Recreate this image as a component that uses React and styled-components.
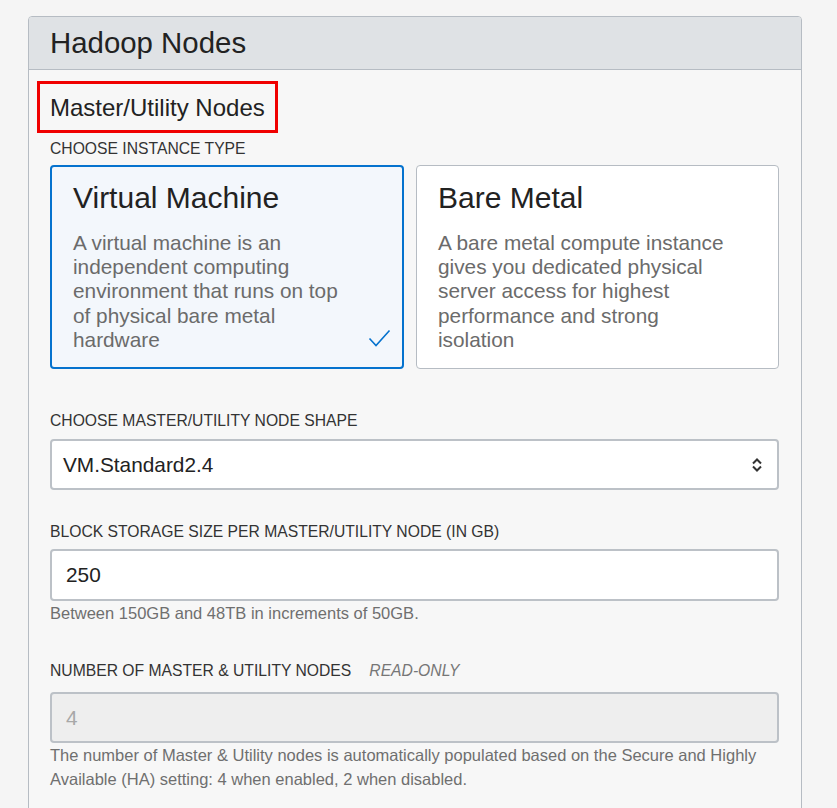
import React from "react";
import styled, { createGlobalStyle } from "styled-components";

const Global = createGlobalStyle`
  html, body { margin: 0; padding: 0; background: #f5f5f5; }
  body { font-family: "Liberation Sans", Arial, Helvetica, sans-serif; color: #222; }
  * { box-sizing: border-box; }
`;

const Page = styled.div`
  padding: 16px 0 0 28px;
  height: 808px;
  overflow: hidden;
`;

const Panel = styled.section`
  width: 774px;
  border: 1px solid #b6bcc3;
  border-radius: 4px 4px 0 0;
  background: #f7f7f7;
  min-height: 900px;
`;

const PanelHeader = styled.header`
  height: 53px;
  display: flex;
  align-items: center;
  padding: 0 21px;
  background: #dfe2e5;
  border-bottom: 1px solid #b6bcc3;
  border-radius: 3px 3px 0 0;
`;

const PanelTitle = styled.h2`
  margin: 0;
  font-size: 29.4px;
  font-weight: 400;
  line-height: 34px;
  color: #222;
`;

const PanelBody = styled.div`
  padding: 11px 22px 40px 21px;
  display: flex;
  flex-direction: column;
`;

const SectionTitle = styled.h3`
  align-self: flex-start;
  margin: 0 0 0 -13px;
  padding: 10px 10px 8px;
  border: 3px solid #f00000;
  font-size: 24px;
  line-height: 28px;
  font-weight: 400;
  color: #222;
`;

const Label = styled.div`
  margin-top: ${(p) => p.$mt}px;
  font-size: 15.7px;
  line-height: 20px;
  color: #333;
  display: flex;
  gap: 18px;
`;

const ReadOnlyTag = styled.span`
  font-style: italic;
  color: #767676;
`;

const CardRow = styled.div`
  margin-top: 6px;
  display: grid;
  grid-template-columns: 354fr 363fr;
  gap: 12px;
`;

const Card = styled.div`
  position: relative;
  border: ${(p) => (p.$selected ? "2px solid #0572ce" : "1px solid #b6bcc3")};
  background: ${(p) => (p.$selected ? "#f3f7fc" : "#ffffff")};
  border-radius: 4px;
  padding: ${(p) => (p.$selected ? "13px 44px 15px 21px" : "14px 44px 16px 21px")};
`;

const CardTitle = styled.div`
  font-size: 30px;
  line-height: 36px;
  color: #222;
`;

const CardText = styled.div`
  margin-top: 15px;
  font-size: 20.8px;
  line-height: 24.2px;
  color: #6b6b6b;
`;

const Check = styled.svg`
  position: absolute;
  right: 11px;
  bottom: 19px;
`;

const FieldBox = styled.div`
  margin-top: ${(p) => p.$mt}px;
  height: ${(p) => p.$h}px;
  border: 2px solid #bcc1c7;
  border-radius: 4px;
  background: #ffffff;
  display: flex;
  align-items: center;
  justify-content: space-between;
  padding: 0 14px 0 11px;
  font-size: 20.8px;
  color: #222;
`;

const TextInput = styled.input`
  margin-top: ${(p) => p.$mt}px;
  height: ${(p) => p.$h}px;
  width: 100%;
  border: 2px solid #bcc1c7;
  border-radius: 4px;
  background: ${(p) => (p.$disabled ? "#eeeeee" : "#ffffff")};
  padding: 0 14px;
  font-family: "Liberation Sans", Arial, Helvetica, sans-serif;
  font-size: 20.8px;
  color: ${(p) => (p.$disabled ? "#a8a8a8" : "#222")};
  outline: none;
`;

const Help = styled.div`
  font-size: 16.5px;
  line-height: 24px;
  color: #6f6f6f;
`;

export default function App() {
  return (
    <>
      <Global />
      <Page>
        <Panel>
          <PanelHeader>
            <PanelTitle>Hadoop Nodes</PanelTitle>
          </PanelHeader>
          <PanelBody>
            <SectionTitle>Master/Utility Nodes</SectionTitle>
            <Label $mt={6}>CHOOSE INSTANCE TYPE</Label>
            <CardRow>
              <Card $selected>
                <CardTitle>Virtual Machine</CardTitle>
                <CardText>
                  A virtual machine is an independent computing environment that runs on top of physical bare metal hardware
                </CardText>
                <Check width="23" height="19" viewBox="0 0 23 19">
                  <polyline points="1.5,9.5 8,16.5 21.5,1.5" fill="none" stroke="#0572ce" strokeWidth="1.6" />
                </Check>
              </Card>
              <Card>
                <CardTitle>Bare Metal</CardTitle>
                <CardText>
                  A bare metal compute instance gives you dedicated physical server access for highest performance and strong isolation
                </CardText>
              </Card>
            </CardRow>

            <Label $mt={42}>CHOOSE MASTER/UTILITY NODE SHAPE</Label>
            <FieldBox $mt={8} $h={51}>
              <span>VM.Standard2.4</span>
              <svg width="12" height="16" viewBox="0 0 12 16">
                <polyline points="2,6.5 6,2.5 10,6.5" fill="none" stroke="#333" strokeWidth="2" />
                <polyline points="2,9.5 6,13.5 10,9.5" fill="none" stroke="#333" strokeWidth="2" />
              </svg>
            </FieldBox>

            <Label $mt={32}>BLOCK STORAGE SIZE PER MASTER/UTILITY NODE (IN GB)</Label>
            <TextInput $mt={7} $h={52} defaultValue="250" />
            <Help>Between 150GB and 48TB in increments of 50GB.</Help>

            <Label $mt={36}>
              <span>NUMBER OF MASTER &amp; UTILITY NODES</span>
              <ReadOnlyTag>READ-ONLY</ReadOnlyTag>
            </Label>
            <TextInput $mt={11} $h={51} $disabled readOnly value="4" />
            <Help>
              The number of Master &amp; Utility nodes is automatically populated based on the Secure and Highly Available (HA) setting: 4 when enabled, 2 when disabled.
            </Help>
          </PanelBody>
        </Panel>
      </Page>
    </>
  );
}
